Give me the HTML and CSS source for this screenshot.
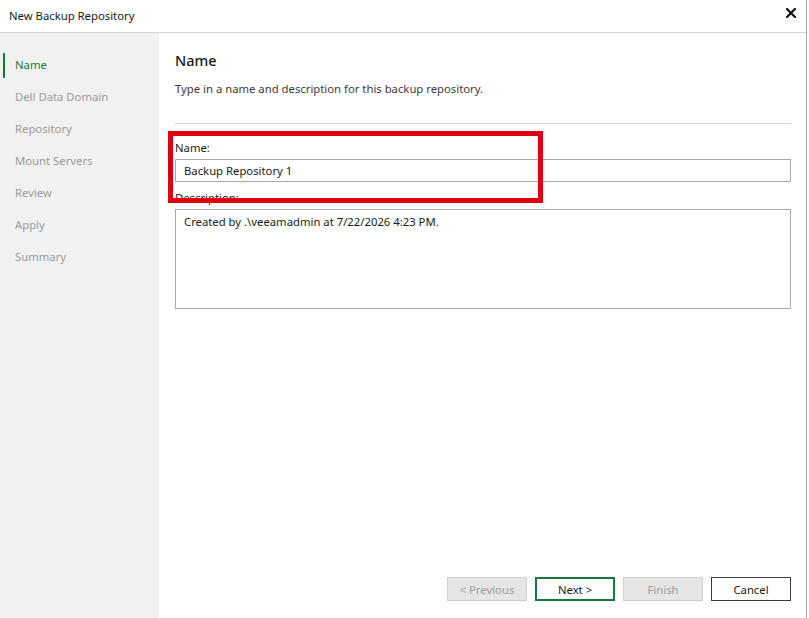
FILE: index.html
```html
<!DOCTYPE html>
<html>
<head>
<meta charset="utf-8">
<link rel="stylesheet" href="styles.css">
</head>
<body>
<div class="window">
  <div class="titlebar">
    <span class="title">New Backup Repository</span>
    <span class="close">
      <svg width="10" height="10" viewBox="0 0 10 10"><path d="M1 1 L9 9 M9 1 L1 9" stroke="#111" stroke-width="2.2" stroke-linecap="square"/></svg>
    </span>
  </div>
  <div class="body">
    <nav class="sidebar">
      <div class="step active">Name</div>
      <div class="step">Dell Data Domain</div>
      <div class="step">Repository</div>
      <div class="step">Mount Servers</div>
      <div class="step">Review</div>
      <div class="step">Apply</div>
      <div class="step">Summary</div>
    </nav>
    <main class="main">
      <h1 class="heading">Name</h1>
      <p class="subtitle">Type in a name and description for this backup repository.</p>
      <div class="separator"></div>
      <div class="form">
        <label class="label">Name:</label>
        <div class="input">Backup Repository 1</div>
        <label class="label desc-label">Description:</label>
        <div class="textarea">Created by .\veeamadmin at 7/22/2026 4:23 PM.</div>
        <div class="highlight"></div>
      </div>
      <div class="buttons">
        <button class="btn disabled">&lt; Previous</button>
        <button class="btn primary">Next &gt;</button>
        <button class="btn disabled">Finish</button>
        <button class="btn">Cancel</button>
      </div>
    </main>
  </div>
</div>
</body>
</html>
```

FILE: styles.css
```css
html, body {
  margin: 0;
  padding: 0;
  background: #ffffff;
}
body {
  width: 809px;
  height: 618px;
  overflow: hidden;
  font-family: "Noto Sans", "Open Sans", sans-serif;
  font-size: 11.3px;
  color: #1e1e1e;
}
.window {
  width: 806px;
  height: 618px;
  border-right: 1px solid #a6a6a6;
  display: flex;
  flex-direction: column;
  background: #fff;
}
.titlebar {
  height: 32px;
  border-bottom: 1px solid #d4d4d4;
  display: flex;
  align-items: center;
  justify-content: space-between;
  padding: 0 10px 0 9px;
  flex-shrink: 0;
}
.title {
  font-size: 11.3px;
  color: #1a1a1a;
  position: relative;
  top: -1px;
}
.close {
  display: flex;
  position: relative;
  top: -3px;
}
.body {
  flex: 1;
  display: flex;
}
.sidebar {
  width: 159px;
  flex-shrink: 0;
  background: #f1f1f1;
  padding-top: 16px;
  display: flex;
  flex-direction: column;
}
.step {
  height: 32px;
  line-height: 32px;
  padding-left: 15px;
  color: #9b9b9b;
  position: relative;
}
.step.active {
  color: #147a3d;
}
.step.active::before {
  content: "";
  position: absolute;
  left: 3px;
  top: 4px;
  width: 2px;
  height: 25px;
  background: #147a3d;
}
.main {
  flex: 1;
  padding: 0 15px 0 16px;
  display: flex;
  flex-direction: column;
}
.heading {
  margin: 16px 0 0 0;
  font-size: 14.5px;
  font-weight: 500;
  line-height: 22px;
  color: #1a1a1a;
}
.subtitle {
  margin: 9px 0 0 0;
  line-height: 18px;
  color: #3c3c3c;
}
.separator {
  margin-top: 25px;
  height: 1px;
  background: #d4d4d4;
}
.form {
  position: relative;
  display: flex;
  flex-direction: column;
  margin-top: 15px;
}
.label {
  line-height: 18px;
  color: #1a1a1a;
}
.input {
  margin-top: 2px;
  height: 21px;
  line-height: 21px;
  border: 1px solid #a9a9a9;
  padding-left: 8px;
  color: #1a1a1a;
}
.desc-label {
  margin-top: 7px;
}
.textarea {
  margin-top: 2px;
  border: 1px solid #a9a9a9;
  padding: 4px 8px;
  box-sizing: border-box;
  height: 100px;
  color: #1a1a1a;
}
.highlight {
  position: absolute;
  left: -7px;
  top: -8px;
  width: 365px;
  height: 62px;
  border: 5px solid #e0000f;
  pointer-events: none;
}
.buttons {
  margin-top: auto;
  margin-bottom: 17px;
  display: flex;
  justify-content: flex-end;
  gap: 8px;
}
.btn {
  width: 80px;
  height: 24px;
  box-sizing: border-box;
  background: #fff;
  border: 1px solid #3a3a3a;
  font-family: "Noto Sans", "Open Sans", sans-serif;
  font-size: 11.3px;
  color: #1a1a1a;
  padding: 0;
}
.btn.disabled {
  background: #e5e5e5;
  border-color: #d0d0d0;
  color: #9d9d9d;
}
.btn.primary {
  border: 2px solid #147a3d;
}
```
